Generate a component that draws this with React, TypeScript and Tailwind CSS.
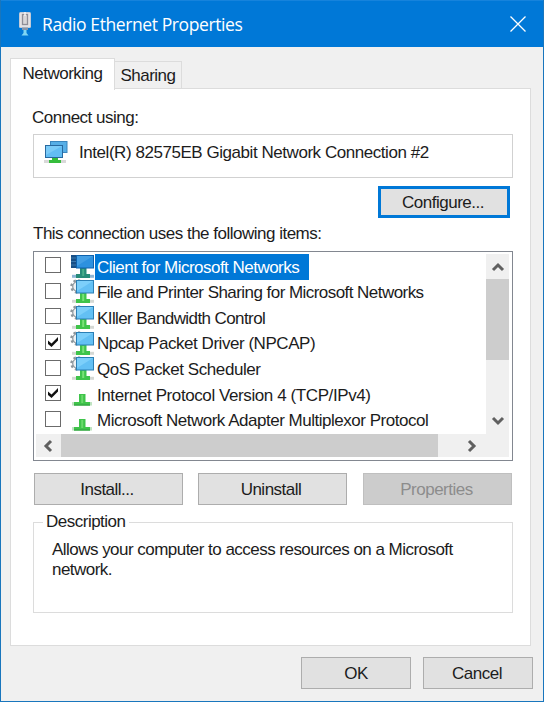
import React from "react";
import clsx from "clsx";

type ItemIcon = "client" | "service" | "protocol";

const items: {
  label: string;
  icon: ItemIcon;
  checked?: boolean;
  selected?: boolean;
  tracking: string;
}[] = [
  { label: "Client for Microsoft Networks", icon: "client", selected: true, tracking: "tracking-[-0.52px]" },
  { label: "File and Printer Sharing for Microsoft Networks", icon: "service", tracking: "tracking-[-0.55px]" },
  { label: "KIller Bandwidth Control", icon: "service", tracking: "tracking-[-0.59px]" },
  { label: "Npcap Packet Driver (NPCAP)", icon: "service", checked: true, tracking: "tracking-[-0.46px]" },
  { label: "QoS Packet Scheduler", icon: "service", tracking: "tracking-[-0.42px]" },
  { label: "Internet Protocol Version 4 (TCP/IPv4)", icon: "protocol", checked: true, tracking: "tracking-[-0.41px]" },
  { label: "Microsoft Network Adapter Multiplexor Protocol", icon: "protocol", tracking: "tracking-[-0.48px]" },
];

function PlugIcon() {
  return (
    <svg width="14" height="26" viewBox="0 0 14 26">
      <rect x="2" y="1" width="12" height="16" rx="1.500" fill="#c3cbd8" />
      <rect x="3" y="2" width="10" height="14" fill="#e4e2e4" />
      <rect x="5.500" y="3.500" width="5" height="10" fill="#d8d6d8" stroke="#8f8e97" strokeWidth="1.300" />
      <path d="M8 1v4" stroke="#f7f5f5" strokeWidth="1.500" />
      <rect x="5" y="16.500" width="6" height="2.500" fill="#8795a8" />
      <path d="M6.500 19h3v3l2 2.500h-7l2-2.500z" fill="#7fd6f4" />
    </svg>
  );
}

function AdapterIcon() {
  return (
    <svg width="25" height="24" viewBox="0 0 25 24">
      <rect x="6" y="1" width="17.500" height="12" fill="#3a85bd" />
      <rect x="7" y="2" width="15.500" height="10" fill="#56aee6" />
      <rect x="1" y="5" width="18" height="13" fill="#28699f" />
      <rect x="2" y="6" width="16" height="11" fill="#62bdf4" />
      <path d="M2 6h16L2 15z" fill="#7bcbf8" />
      <path d="M0 21.500h22" stroke="#d9d9d9" strokeWidth="3" />
      <path d="M8 18h6v2h3v3H5v-3h3z" fill="#35bd3c" />
    </svg>
  );
}

function RowIcon({ kind }: { kind: ItemIcon }) {
  const client = kind === "client";
  return (
    <svg width="25" height="26" viewBox="0 0 25 26" className="shrink-0">
      {kind === "protocol" ? (
        <>
          <path d="M2 21.800h20" stroke="#bfe3c1" strokeWidth="3.500" />
          <path d="M9 12h6.500v8H20v3.500H4V20h5z" fill="#3fc44a" />
          <path d="M12.200 13v8" stroke="#6ada6b" strokeWidth="2" />
          <path d="M4 23h16" stroke="#329d42" strokeWidth="1" />
        </>
      ) : (
        <>
          {client ? (
            <>
              <rect x="1" y="1" width="10" height="13" fill="#174e86" />
              <path d="M1 4h8M1 7.500h8M1 11h8" stroke="#3b78ad" />
            </>
          ) : (
            <>
              <circle cx="7.500" cy="7.500" r="6" fill="none" stroke="#8c969c" strokeWidth="2.500" strokeDasharray="2.400 2.300" />
              <circle cx="7.500" cy="7.500" r="4.800" fill="#eef1f2" stroke="#929ba1" strokeWidth="1.300" />
            </>
          )}
          <path d="M2 22.300h22" stroke={client ? "#8db6d6" : "#d4d8d4"} strokeWidth="3" />
          <path d="M10 14h6.500v6H20v4H6v-4h4z" fill={client ? "#278b79" : "#3fc44a"} />
          <path d="M13.200 15v7" stroke={client ? "#48ad8b" : "#79e277"} strokeWidth="2" />
          <rect x="6" y="1" width="18" height="13.500" fill={client ? "#0e61ac" : "#2b7fb5"} />
          <rect x="7" y="2" width="16" height="11.500" fill={client ? "#2d91df" : "#63c0f4"} />
          <path d="M7 2h16L7 12z" fill={client ? "#439fe5" : "#7ccffa"} />
        </>
      )}
    </svg>
  );
}

function Checkbox({ checked }: { checked?: boolean }) {
  return (
    <span className="mb-[3px] flex size-4 shrink-0 items-center justify-center border border-[#6b6b6b] bg-white">
      {checked && (
        <svg width="12" height="12" viewBox="0 0 12 12">
          <path d="M1 4.500v3.500L4.500 11 11 4.500V1L4.500 7.500z" fill="#111" />
        </svg>
      )}
    </span>
  );
}

function Chevron({ d }: { d: string }) {
  return (
    <svg width="14" height="14" viewBox="0 0 14 14" fill="none" stroke="#606060" strokeWidth="3">
      <path d={d} />
    </svg>
  );
}

function Button({ children, className }: { children: React.ReactNode; className: string }) {
  return (
    <button className={clsx("flex shrink-0 items-center justify-center border leading-none", className)}>
      {children}
    </button>
  );
}

export default function App() {
  return (
    <div className="flex h-[702px] w-[544px] flex-col overflow-hidden border border-t-0 border-[#1976bd] bg-[#f0f0f0] font-['Liberation_Sans',Arial,sans-serif] text-[17px] tracking-[-0.5px] text-[#1c1c1c]">
      {/* Title bar */}
      <header className="flex h-[47px] shrink-0 items-center border-t border-[#1683dc] bg-[#0078d7] pr-[17px] pl-4 text-white">
        <PlugIcon />
        <h1 className="ml-[11px] flex-1 pt-px font-['Open_Sans','Noto_Sans',sans-serif] text-[17.5px] tracking-[-0.4px] whitespace-nowrap">
          Radio Ethernet Properties
        </h1>
        <svg width="16" height="16" viewBox="0 0 16 16" stroke="#fff" strokeWidth="1.300">
          <path d="M.5.500l15 15M15.500.500l-15 15" />
        </svg>
      </header>

      {/* Tabs */}
      <nav className="flex h-[42px] shrink-0 items-end pl-[9px]">
        <div className="relative z-10 -mb-px flex h-8 w-[105px] items-center justify-center border border-b-0 border-[#dcdcdc] bg-white pb-0.5">
          Networking
        </div>
        <div className="flex h-7 w-[67px] items-center justify-center border border-b-0 border-l-0 border-[#dcdcdc]">
          Sharing
        </div>
      </nav>

      <main className="-mt-px ml-[9px] flex h-[558px] w-[521px] shrink-0 flex-col border border-[#dcdcdc] bg-white pt-[19px] pl-[22px]">
        <p className="-ml-px h-[26px] leading-5">Connect using:</p>
        <div className="flex h-11 w-[480px] shrink-0 items-start border border-[#d1d1d1] pt-[5px] pl-[10px]">
          <AdapterIcon />
          <span className="ml-[10px] pt-px leading-6 tracking-[-0.45px]">
            Intel(R) 82575EB Gigabit Network Connection #2
          </span>
        </div>
        <div className="mt-2 flex w-[477px] justify-end">
          <Button className="h-8 w-[132px] border-[3px] border-[#0078d7] bg-[#e1e1e1] pt-px pr-0.5">Configure...</Button>
        </div>
        <p className="mt-[5px] h-7 pt-px leading-5">This connection uses the following items:</p>

        {/* Component list */}
        <div className="h-[210px] w-[480px] shrink-0 border border-[#828790] p-0.5">
          <div className="flex h-[180px]">
            <ul className="w-[450px] shrink-0 overflow-hidden">
              {items.map((item) => (
                <li key={item.label} className="flex h-[25.6px] items-center pl-[9px]">
                  <Checkbox checked={item.checked} />
                  <span className="ml-[9px] flex">
                    <RowIcon kind={item.icon} />
                  </span>
                  <span
                    className={clsx(
                      "flex h-full items-center pt-px whitespace-nowrap",
                      item.tracking,
                      item.selected && "bg-[#0078d7] pr-[10px] text-white"
                    )}
                  >
                    <span className="pl-0.5">{item.label}</span>
                  </span>
                </li>
              ))}
            </ul>
            <div className="flex w-[23px] flex-col items-center bg-[#f0f0f0]">
              <div className="flex h-[25px] items-center">
                <Chevron d="M2 10l5-5 5 5" />
              </div>
              <div className="h-[81px] w-full bg-[#cdcdcd]" />
              <div className="mt-auto flex h-[27px] items-center">
                <Chevron d="M2 4l5 5 5-5" />
              </div>
            </div>
          </div>
          <div className="flex h-[23px] w-[473px] items-center bg-[#f0f0f0]">
            <div className="flex w-[25px] justify-center">
              <Chevron d="M9 2L4 7l5 5" />
            </div>
            <div className="h-full w-[377px] bg-[#cdcdcd]" />
            <div className="ml-[27px]">
              <Chevron d="M4 2l5 5-5 5" />
            </div>
          </div>
        </div>

        <div className="mt-3 flex w-[480px] shrink-0 pl-px">
          <Button className="h-8 w-[149px] border-[#adadad] bg-[#e1e1e1] pt-px pr-[3px]">Install...</Button>
          <Button className="ml-[15px] h-8 w-[149px] border-[#adadad] bg-[#e1e1e1] pt-px pr-[3px]">Uninstall</Button>
          <Button className="ml-4 h-8 w-[149px] border-[#bfbfbf] bg-[#cccccc] pt-px pr-0.5 text-[#8c8c8c]">
            Properties
          </Button>
        </div>

        <fieldset className="mt-[7px] h-[101px] w-[480px] shrink-0 border border-[#dcdcdc] pl-[18px]">
          <legend className="-ml-[9px] px-[3px] leading-5">Description</legend>
          <p className="mt-2 w-[420px] leading-5 tracking-[-0.53px]">
            Allows your computer to access resources on a Microsoft network.
          </p>
        </fieldset>
      </main>

      <footer className="mt-[11px] flex shrink-0 justify-end gap-3 pr-[10px]">
        <Button className="h-8 w-[110px] border-[#adadad] bg-[#e1e1e1] pt-px">OK</Button>
        <Button className="h-8 w-[110px] border-[#adadad] bg-[#e1e1e1] pt-px pr-0.5">Cancel</Button>
      </footer>
    </div>
  );
}
